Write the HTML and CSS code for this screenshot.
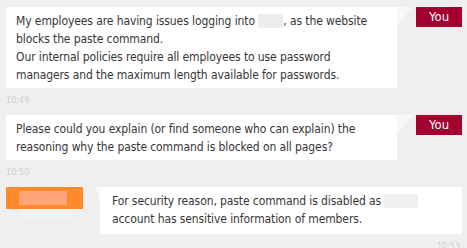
FILE: index.html
```html
<!DOCTYPE html>
<html lang="en">
<head>
  <meta charset="UTF-8" />
  <meta name="viewport" content="width=device-width, initial-scale=1.0" />
  <title>Support chat</title>
  <link rel="stylesheet" href="styles.css">
</head>
<body>
  <div class="chat">
    <!-- Customer message -->
    <div class="row out">
      <div class="bubble">
        <p>My employees are having issues logging into <span class="hidden-word w-site"></span>, as the website<br>blocks the paste command.</p>
        <p>Our internal policies require all employees to use password<br>managers and the maximum length available for passwords.</p>
      </div>
      <div class="tail"></div>
      <div class="who">You</div>
    </div>
    <div class="time">10:49</div>

    <div class="row out">
      <div class="bubble">
        <p>Please could you explain (or find someone who can explain) the<br>reasoning why the paste command is blocked on all pages?</p>
      </div>
      <div class="tail"></div>
      <div class="who">You</div>
    </div>
    <div class="time">10:50</div>

    <!-- Agent reply -->
    <div class="row in">
      <div class="agent">
        <span class="agent-name"></span>
        <span class="agent-ghost"></span>
      </div>
      <div class="tail"></div>
      <div class="bubble">
        <p>For security reason, paste command is disabled as <span class="hidden-word w-brand"></span><br>account has sensitive information of members.</p>
      </div>
    </div>
    <div class="time right">10:53</div>
  </div>
</body>
</html>
```

FILE: styles.css
```css
:root {
  --bg-color: #efefef;
  --bubble-bg: #ffffff;
  --text-color: #363636;
  --you-color: #a3002f;
  --agent-color: #ff8a2c;
  --time-color: #cfcfcf;
}
body {
  margin: 0;
  background-color: var(--bg-color);
  font-family: "DejaVu Sans Condensed", "DejaVu Sans", sans-serif;
  font-size: 12px;
  color: var(--text-color);
  overflow: hidden;
}
.chat {
  padding: 7px 5px 0 6px;
}
.row {
  display: flex;
  align-items: flex-start;
}
.bubble {
  background-color: var(--bubble-bg);
  line-height: 18px;
  letter-spacing: -0.1px;
  white-space: nowrap;
}
.bubble p {
  margin: 0;
}
.out .bubble {
  width: 372px;
  padding: 5px 10px 4px 10px;
}
.out .tail {
  width: 16px;
  height: 18px;
  background: #f8f8f8;
  clip-path: polygon(0 0, 100% 0, 0 100%);
  margin-right: 3px;
}
.who {
  width: 46px;
  height: 20px;
  line-height: 20px;
  text-align: center;
  background-color: var(--you-color);
  color: #fff;
  font-size: 13px;
}
.time {
  font-size: 9px;
  color: var(--time-color);
  height: 27px;
  line-height: 24px;
}
.time.right {
  text-align: right;
  line-height: 24px;
  padding-right: 2px;
}
.agent {
  width: 77px;
  display: flex;
  flex-direction: column;
  margin-right: 12px;
}
.agent-name {
  display: block;
  height: 14px;
  border: 4px solid var(--agent-color);
  border-left-width: 13px;
  border-right-width: 16px;
  background-clip: padding-box;
  background-color: #ffa577;
}
.agent-ghost {
  display: block;
  height: 6px;
  width: 54px;
  margin: 3px 0 0 14px;
  background-color: #f3f3f3;
}
.in .tail {
  width: 5px;
  height: 14px;
  background: #f8f8f8;
  clip-path: polygon(0 0, 100% 0, 100% 100%);
}
.in .bubble {
  flex: 1;
  padding: 5px 10px 6px 12px;
}
.hidden-word {
  display: inline-block;
  height: 14px;
  vertical-align: -3px;
  background-color: #ececec;
}
.w-site {
  width: 25px;
}
.w-brand {
  width: 34px;
  background-color: #f0f0f0;
}
```
